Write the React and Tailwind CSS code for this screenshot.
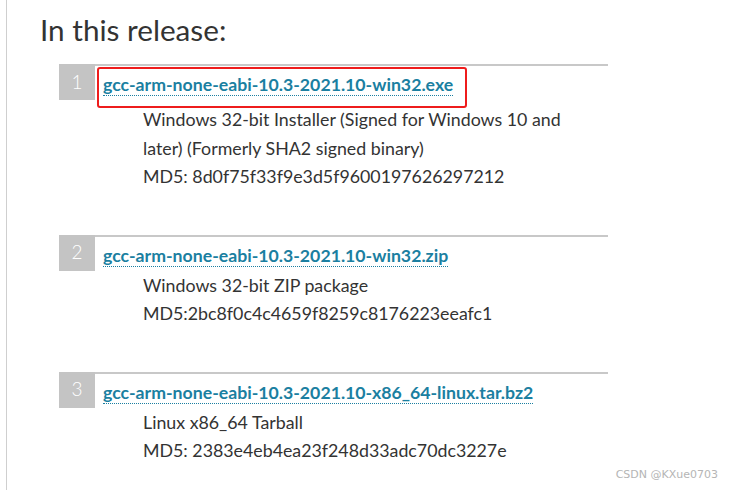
import React from "react";

const items = [
  {
    n: 1,
    name: "gcc-arm-none-eabi-10.3-2021.10-win32.exe",
    lines: [
      "Windows 32-bit Installer (Signed for Windows 10 and",
      "later) (Formerly SHA2 signed binary)",
      "MD5: 8d0f75f33f9e3d5f9600197626297212",
    ],
    boxed: true,
  },
  {
    n: 2,
    name: "gcc-arm-none-eabi-10.3-2021.10-win32.zip",
    lines: ["Windows 32-bit ZIP package", "MD5:2bc8f0c4c4659f8259c8176223eeafc1"],
  },
  {
    n: 3,
    name: "gcc-arm-none-eabi-10.3-2021.10-x86_64-linux.tar.bz2",
    lines: ["Linux x86_64 Tarball", "MD5: 2383e4eb4ea23f248d33adc70dc3227e"],
  },
];

export default function App() {
  return (
    <div
      className="relative w-[731px] h-[490px] bg-white overflow-hidden text-[#333] border-l border-[#cfcfcf] ml-[6px]"
      style={{ fontFamily: "Lato, 'Open Sans', sans-serif" }}
    >
      <div className="pl-[33px] pt-[10px]">
        <h2 className="text-[29.7px] leading-[40px] font-normal text-[#333]">In this release:</h2>
        <ol className="mt-[14px] pl-[19px] flex flex-col gap-[44px]">
          {items.map((it) => (
            <li key={it.n} className="w-[549px]">
              <div className="flex items-stretch">
                <div className="w-[36px] h-[36px] bg-[#c4c4c4] text-white text-[19px] font-light flex items-center justify-center">
                  {it.n}
                </div>
                <div className="relative flex-1 border-t-2 border-[#c8c8c8] pl-[8px] pt-[7px]">
                  <span className="text-[17.7px] leading-[23px] font-bold text-[#1b7fa1] border-b border-dotted border-[#1b7fa1]">
                    {it.name}
                  </span>
                  {it.boxed && (
                    <div className="absolute left-[2px] top-[1px] w-[370px] h-[41px] border-2 border-[#ee1c1c] rounded-[3px]" />
                  )}
                </div>
              </div>
              <div className={it.boxed ? "pl-[84px] pt-[5px]" : "pl-[84px]"}>
                {it.lines.map((l, i) => (
                  <div key={i} className="text-[17.8px] leading-[28.5px]">
                    {l}
                  </div>
                ))}
              </div>
            </li>
          ))}
        </ol>
      </div>
      <div
        className="absolute right-[19px] bottom-[7px] text-[11px] text-[#b5b5b5]"
        style={{ fontFamily: "'DejaVu Sans', sans-serif" }}
      >
        CSDN @KXue0703
      </div>
    </div>
  );
}
